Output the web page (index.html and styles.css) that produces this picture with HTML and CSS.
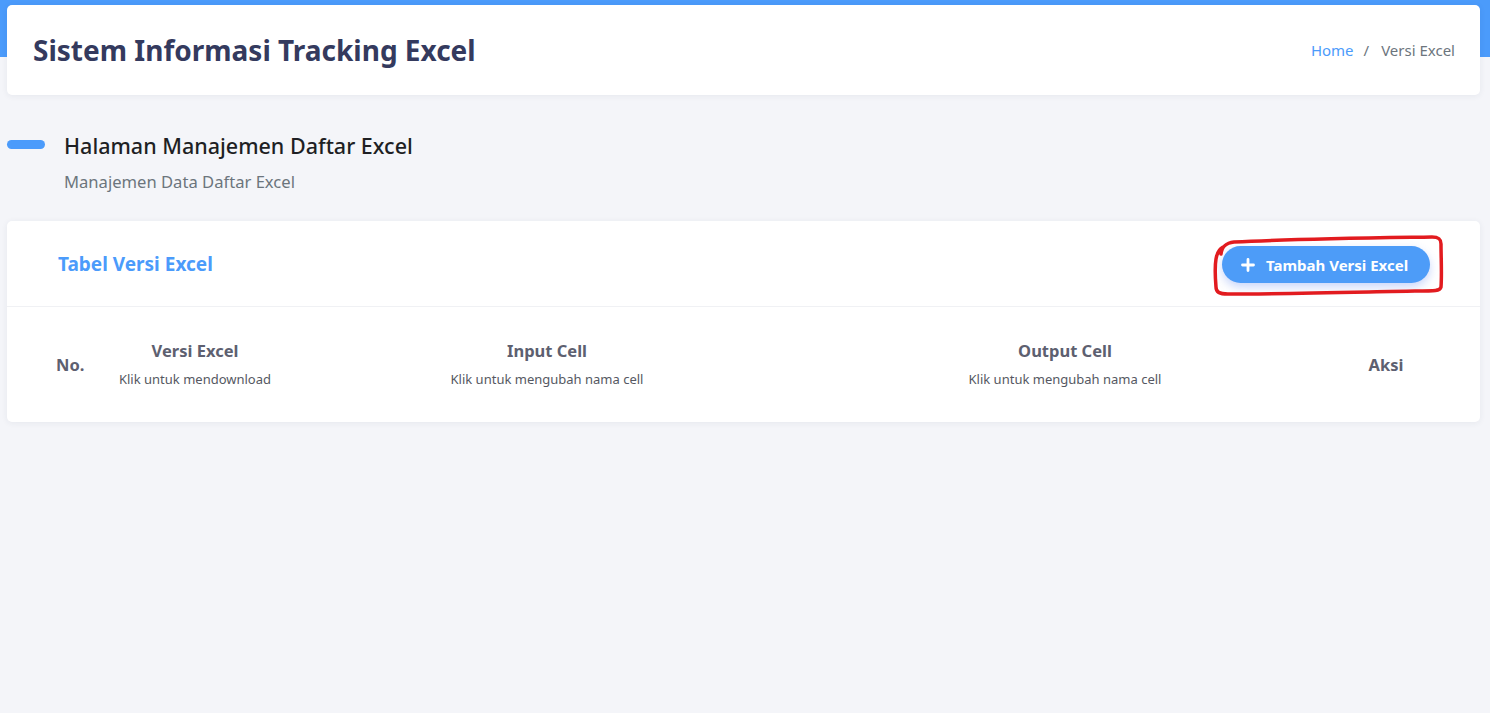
FILE: index.html
```html
<!DOCTYPE html>
<html lang="id">
<head>
<meta charset="utf-8">
<title>Sistem Informasi Tracking Excel</title>
<link rel="stylesheet" href="styles.css">
</head>
<body>
<div class="topband"></div>
<div class="page">
  <header class="hero card">
    <h1 class="hero-title">Sistem Informasi Tracking Excel</h1>
    <nav class="crumbs"><a class="crumb-link">Home</a><span class="crumb-sep">/</span><span class="crumb-cur">Versi Excel</span></nav>
  </header>

  <section class="section-head">
    <div class="pill-mark"></div>
    <div class="section-text">
      <h2 class="section-title">Halaman Manajemen Daftar Excel</h2>
      <p class="section-sub">Manajemen Data Daftar Excel</p>
    </div>
  </section>

  <div class="card table-card">
    <div class="table-card-head">
      <h3 class="table-title">Tabel Versi Excel</h3>
      <div class="btn-wrap">
        <button class="btn-add"><svg class="plus" viewBox="0 0 14 14" width="14" height="14"><path d="M7 1.5v11M1.5 7h11" stroke="#fff" stroke-width="2.8" stroke-linecap="round"/></svg>Tambah Versi Excel</button>
        <svg class="scribble" viewBox="0 0 240 66" width="240" height="66"><path d="M11 21 C12 13 16 10 24 9 C80 6 160 5 222 4 C229 4 231 6 231 11 C231 25 232 40 231 54 C230 58 226 58 205 58 C150 59 70 61 18 61 C9 61 6 59 6 54 C5 42 5 32 6 26 C7 20 9 16 13 14" fill="none" stroke="#e21b1f" stroke-width="3.5" stroke-linecap="round" stroke-linejoin="round"/></svg>
      </div>
    </div>
    <div class="table-body">
      <div class="thead">
        <div class="th th-no">No.</div>
        <div class="th"><span class="th-main">Versi Excel</span><span class="th-sub">Klik untuk mendownload</span></div>
        <div class="th"><span class="th-main">Input Cell</span><span class="th-sub">Klik untuk mengubah nama cell</span></div>
        <div class="th"><span class="th-main">Output Cell</span><span class="th-sub">Klik untuk mengubah nama cell</span></div>
        <div class="th th-aksi">Aksi</div>
      </div>
    </div>
  </div>
</div>
</body>
</html>
```

FILE: styles.css
```css
* { box-sizing: border-box; }
html, body { margin: 0; padding: 0; }
body {
  background: #f4f5f9;
  font-family: "Noto Sans", Lato, sans-serif;
  color: #333;
  position: relative;
  min-height: 713px;
}
.topband {
  position: absolute;
  left: 0; top: 0; right: 0;
  height: 57px;
  background: #4b9bfb;
}
.page {
  position: relative;
  padding: 5px 10px 0 7px;
}
.card {
  background: #fff;
  border-radius: 5px;
  box-shadow: 0 1px 6px rgba(40, 50, 90, 0.07);
}
.hero {
  height: 90px;
  display: flex;
  align-items: center;
  justify-content: space-between;
  padding: 0 25px 0 26px;
}
.hero-title {
  margin: 0;
  font-size: 28px;
  font-weight: 700;
  color: #343a5e;
}
.crumbs {
  font-size: 15px;
  display: flex;
  align-items: center;
}
.crumb-link { color: #4b9bfb; }
.crumb-sep { color: #6c757d; margin: 0 12px 0 10px; }
.crumb-cur { color: #6c757d; }

.section-head {
  display: flex;
  align-items: flex-start;
  padding: 36px 0 0 0;
  height: 126px;
}
.pill-mark {
  width: 38px;
  height: 9px;
  border-radius: 5px;
  background: #4b9bfb;
  margin-top: 9px;
  margin-right: 19px;
}
.section-title {
  margin: 0;
  font-size: 21.5px;
  font-weight: 500;
  color: #1e1f24;
  line-height: 30px;
}
.section-sub {
  margin: 10px 0 0;
  font-size: 16.6px;
  color: #6c757d;
  line-height: 22px;
}

.table-card { height: 201px; }
.table-card-head {
  height: 86px;
  display: flex;
  align-items: center;
  justify-content: space-between;
  padding: 0 50px 0 51px;
  border-bottom: 1px solid #f0f1f4;
}
.table-title {
  margin: 0;
  font-size: 19px;
  font-weight: 700;
  color: #4b9bfb;
}
.btn-wrap { position: relative; margin-top: 2px; }
.btn-add {
  display: flex;
  align-items: center;
  gap: 11px;
  height: 37px;
  width: 208px;
  padding: 0 0 0 19px;
  border: none;
  border-radius: 19px;
  background: #4d9cf8;
  color: #fff;
  font-family: "Noto Sans", Lato, sans-serif;
  font-size: 15px;
  font-weight: 700;
  box-shadow: 0 4px 10px rgba(77, 120, 240, 0.3);
}
.plus { flex: none; }
.scribble {
  position: absolute;
  left: -12px;
  top: -13px;
  pointer-events: none;
}

.table-body { padding: 0 29px 0 38px; }
.thead {
  display: grid;
  grid-template-columns: 60px 180px 524px 512px 130px;
  height: 114px;
  align-items: center;
}
.th {
  display: flex;
  flex-direction: column;
  align-items: center;
  color: #5d6070;
}
.th-main { font-size: 16.5px; font-weight: 700; line-height: 22px; }
.th-sub { font-size: 13px; font-weight: 400; margin-top: 8px; color: #555862; }
.th-no { align-items: flex-start; padding-left: 11px; font-size: 16.5px; font-weight: 700; }
.th-aksi { font-size: 16.5px; font-weight: 700; }
```
